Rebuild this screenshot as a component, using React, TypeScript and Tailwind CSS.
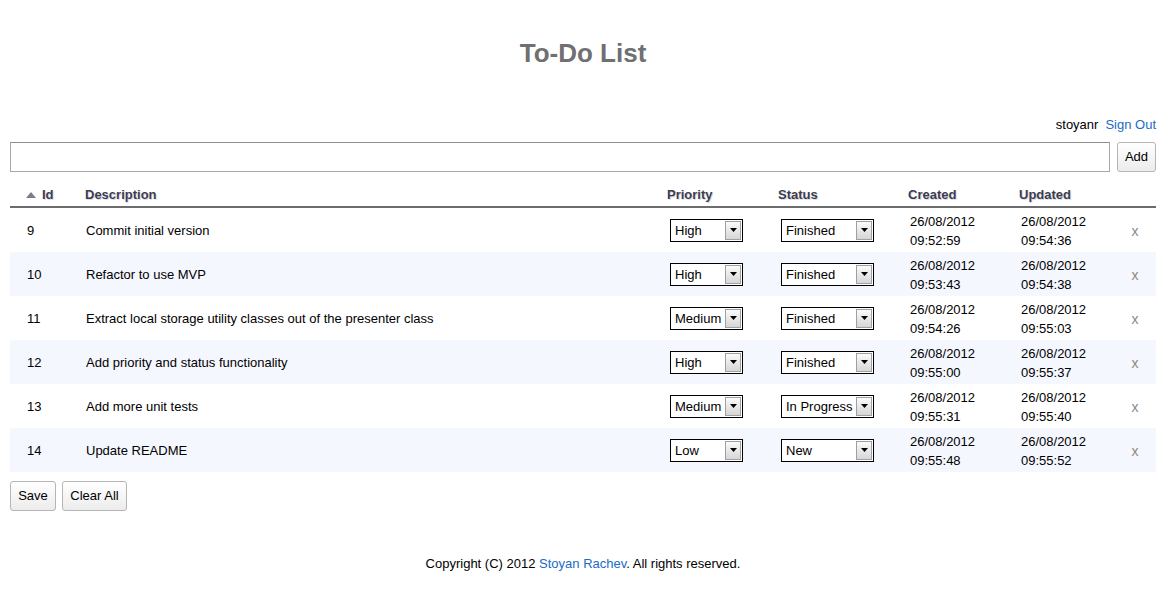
import React from 'react';

type Todo = {
  id: number;
  description: string;
  priority: string;
  status: string;
  created: [string, string];
  updated: [string, string];
};

const todos: Todo[] = [
  { id: 9, description: 'Commit initial version', priority: 'High', status: 'Finished', created: ['26/08/2012', '09:52:59'], updated: ['26/08/2012', '09:54:36'] },
  { id: 10, description: 'Refactor to use MVP', priority: 'High', status: 'Finished', created: ['26/08/2012', '09:53:43'], updated: ['26/08/2012', '09:54:38'] },
  { id: 11, description: 'Extract local storage utility classes out of the presenter class', priority: 'Medium', status: 'Finished', created: ['26/08/2012', '09:54:26'], updated: ['26/08/2012', '09:55:03'] },
  { id: 12, description: 'Add priority and status functionality', priority: 'High', status: 'Finished', created: ['26/08/2012', '09:55:00'], updated: ['26/08/2012', '09:55:37'] },
  { id: 13, description: 'Add more unit tests', priority: 'Medium', status: 'In Progress', created: ['26/08/2012', '09:55:31'], updated: ['26/08/2012', '09:55:40'] },
  { id: 14, description: 'Update README', priority: 'Low', status: 'New', created: ['26/08/2012', '09:55:48'], updated: ['26/08/2012', '09:55:52'] },
];

// old-style dropdown, drawn by hand so it looks the same everywhere
const FakeSelect = ({ value, wide }: { value: string; wide?: boolean }) => (
  <div className={`flex h-[23px] items-center border border-black bg-white ${wide ? 'w-[93px]' : 'w-[73px]'}`}>
    <span className="flex-1 whitespace-nowrap pl-[4px] pt-[2px] leading-[16px]">{value}</span>
    <span className="mr-[1px] flex h-[19px] w-[16px] items-center justify-center border border-[#a0a0a0] bg-gradient-to-b from-[#fbfbfb] to-[#d6d6d6]">
      <svg width="7" height="4" viewBox="0 0 7 4">
        <path d="M0 0h7L3.5 4z" fill="#000" />
      </svg>
    </span>
  </div>
);

const Btn = ({ children, className = '' }: { children: React.ReactNode; className?: string }) => (
  <button className={`h-[30px] rounded-[3px] border border-[#b5b5b5] bg-gradient-to-b from-white to-[#ececec] text-[13px] text-black ${className}`}>
    {children}
  </button>
);

const headCell = "font-bold text-[#3c3d4e] [text-shadow:1px_1px_1px_#d4d6e4]";

export default function App() {
  return (
    <div className="min-h-screen bg-white pl-[10px] pr-[11px] font-['Liberation_Sans',Arial,sans-serif] text-[13px] text-black">
      <h1 className="pt-[38px] text-center text-[26px] font-bold leading-[30px] text-[#707073]">To-Do List</h1>

      <div className="mt-[49px] flex justify-end gap-[7px] leading-[16px]">
        <span>stoyanr</span>
        <a className="text-[#1a6cc4]" href="#">Sign Out</a>
      </div>

      <div className="mt-[9px] flex items-start gap-[7px]">
        <input className="h-[30px] flex-1 border border-[#a9a9a9] border-t-[#8f8f8f] bg-white px-1 outline-none" />
        <Btn className="w-[39px]">Add</Btn>
      </div>

      <div className="grid grid-cols-[66px_1fr_111px_130px_111px_106px_41px]">
        {/* header */}
        <div className={`h-[34px] pl-[16px] pt-[15px] leading-[16px] ${headCell}`}>
          <div className="flex h-[16px] items-center gap-[6px]">
            <svg width="10" height="6" viewBox="0 0 10 6">
              <path d="M0 6L5 0l5 6z" fill="#7b7d88" />
            </svg>
            <span>Id</span>
          </div>
        </div>
        <div className={`h-[34px] pl-[9px] pt-[15px] leading-[16px] ${headCell}`}>Description</div>
        <div className={`h-[34px] pl-[10px] pt-[15px] leading-[16px] ${headCell}`}>Priority</div>
        <div className={`h-[34px] pl-[10px] pt-[15px] leading-[16px] ${headCell}`}>Status</div>
        <div className={`h-[34px] pl-[10px] pt-[15px] leading-[16px] ${headCell}`}>Created</div>
        <div className={`h-[34px] pl-[10px] pt-[15px] leading-[16px] ${headCell}`}>Updated</div>
        <div className="h-[34px]" />
        <div className="col-span-7 h-[2px] bg-[#6a6c6e]" />

        {todos.map((t, i) => {
          const bg = i % 2 === 1 ? 'bg-[#f5f7fe]' : 'bg-white';
          return (
            <React.Fragment key={t.id}>
              <div className={`flex h-[44px] items-center pl-[17px] pt-[2px] ${bg}`}>{t.id}</div>
              <div className={`flex h-[44px] items-center pl-[10px] pt-[2px] ${bg}`}>{t.description}</div>
              <div className={`flex h-[44px] items-center pl-[13px] ${bg}`}>
                <FakeSelect value={t.priority} />
              </div>
              <div className={`flex h-[44px] items-center pl-[13px] ${bg}`}>
                <FakeSelect value={t.status} wide />
              </div>
              <div className={`flex h-[44px] flex-col justify-center pl-[12px] pt-[2px] leading-[19px] ${bg}`}>
                <span>{t.created[0]}</span>
                <span>{t.created[1]}</span>
              </div>
              <div className={`flex h-[44px] flex-col justify-center pl-[12px] pt-[2px] leading-[19px] ${bg}`}>
                <span>{t.updated[0]}</span>
                <span>{t.updated[1]}</span>
              </div>
              <div className={`flex h-[44px] items-center justify-center pr-[1px] pt-[2px] text-[14px] text-[#8a8a8a] ${bg}`}>x</div>
            </React.Fragment>
          );
        })}
      </div>

      <div className="mt-[9px] flex gap-[6px]">
        <Btn className="w-[46px]">Save</Btn>
        <Btn className="w-[65px]">Clear All</Btn>
      </div>

      <p className="mt-[45px] text-center leading-[16px]">
        Copyright (C) 2012 <a className="text-[#1a6cc4]" href="#">Stoyan Rachev</a>. All rights reserved.
      </p>
    </div>
  );
}
